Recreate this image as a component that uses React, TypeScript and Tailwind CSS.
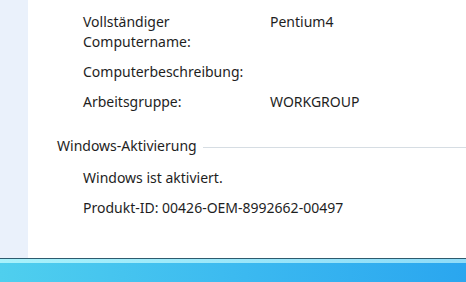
import React from 'react';

const rows: { label: string[]; value: string }[] = [
  { label: ['Vollständiger', 'Computername:'], value: 'Pentium4' },
  { label: ['Computerbeschreibung:'], value: '' },
  { label: ['Arbeitsgruppe:'], value: 'WORKGROUP' },
];

export default function App() {
  return (
    <div
      className="w-[466px] h-[282px] flex flex-col overflow-hidden text-[14px] text-[#1e1e1e]"
      style={{ fontFamily: '"Noto Sans", "Open Sans", sans-serif' }}
    >
      <div className="flex flex-1 min-h-0">
        {/* linke Leiste */}
        <div className="w-[28px] bg-[#eaf1fb]" />

        <div className="flex-1 bg-white pt-[12px]">
          <div className="pl-[55px] flex flex-col gap-[10px]">
            {rows.map((r) => (
              <div key={r.label[0]} className="grid grid-cols-[187px_1fr] leading-[20px]">
                <div>
                  {r.label.map((l) => (
                    <div key={l}>{l}</div>
                  ))}
                </div>
                <div>{r.value}</div>
              </div>
            ))}
          </div>

          <div className="flex items-center mt-[24px] pl-[29px]">
            <span className="leading-[20px]">Windows-Aktivierung</span>
            <div className="flex-1 h-px bg-[#d6dde3] ml-[6px] mt-[2px]" />
          </div>

          <div className="pl-[55px] mt-[12px] flex flex-col gap-[10px] leading-[20px]">
            <div>Windows ist aktiviert.</div>
            <div>Produkt-ID: 00426-OEM-8992662-00497</div>
          </div>
        </div>
      </div>

      {/* Taskleiste */}
      <div className="h-[24px] border-t border-[#2d5b6e] flex flex-col">
        <div className="h-[4px] bg-gradient-to-r from-[#a8f2fb] to-[#8fdcf8]" />
        <div className="flex-1 bg-gradient-to-r from-[#4fcfee] via-[#3cbaf0] to-[#2aa6ef]" />
      </div>
    </div>
  );
}
